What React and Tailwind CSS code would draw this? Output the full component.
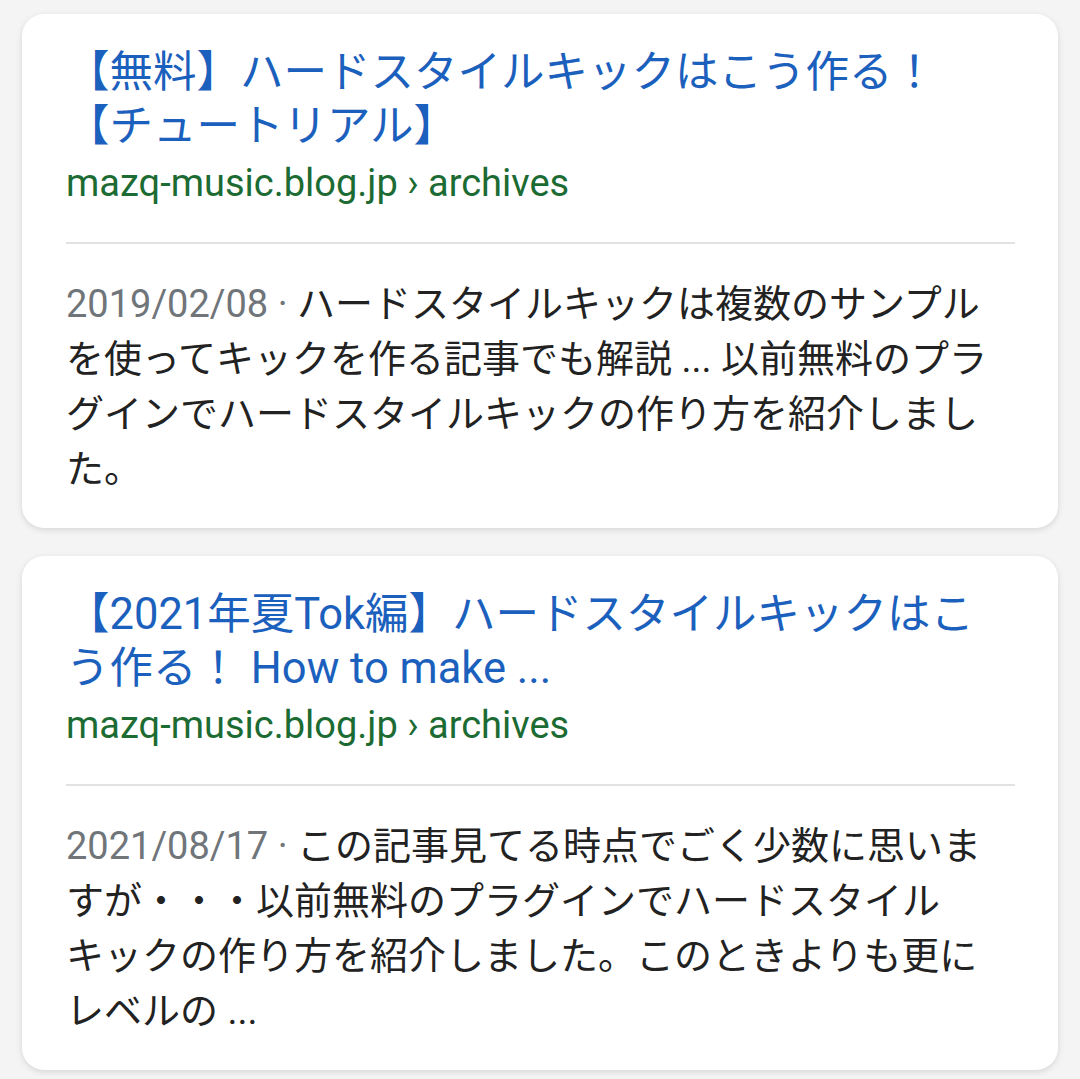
const results = [
  {
    title: ["【無料】ハードスタイルキックはこう作る！", "【チュートリアル】"],
    url: "mazq-music.blog.jp › archives",
    date: "2019/02/08",
    lines: [
      "ハードスタイルキックは複数のサンプル",
      "を使ってキックを作る記事でも解説 ... 以前無料のプラ",
      "グインでハードスタイルキックの作り方を紹介しまし",
      "た。",
    ],
  },
  {
    title: ["【2021年夏Tok編】ハードスタイルキックはこ", "う作る！ How to make ..."],
    url: "mazq-music.blog.jp › archives",
    date: "2021/08/17",
    lines: [
      "この記事見てる時点でごく少数に思いま",
      "すが・・・以前無料のプラグインでハードスタイル",
      "キックの作り方を紹介しました。このときよりも更に",
      "レベルの ...",
    ],
  },
];

function ResultCard({ item }) {
  return (
    <div className="bg-white rounded-[22px] shadow-[0_2px_6px_rgba(0,0,0,0.12)] pl-[44px] pr-[43px] pt-[32px] pb-[31px]">
      <div className="text-[43.5px] leading-[54px] text-[#1b60bd] whitespace-nowrap">
        {item.title.map((t) => (
          <div key={t}>{t}</div>
        ))}
      </div>
      <div className="mt-[4px] text-[38px] leading-[50px] text-[#1b6b33] whitespace-nowrap">
        {item.url}
      </div>
      <div className="mt-[34px] h-[2px] bg-[#e2e2e2]" />
      <div className="mt-[33px] text-[38px] leading-[55px] text-[#222222] whitespace-nowrap">
        {item.lines.map((l, i) => (
          <div key={i}>
            {i === 0 && (
              <span className="text-[#70757a]">{item.date} · </span>
            )}
            {l}
          </div>
        ))}
      </div>
    </div>
  );
}

export default function App() {
  return (
    <div
      className="min-h-[1079px] bg-[#f4f4f4] px-[22px] pt-[14px] flex flex-col gap-[28px]"
      style={{ fontFamily: 'Roboto, "Noto Sans CJK JP", sans-serif' }}
    >
      {results.map((r, i) => (
        <ResultCard key={i} item={r} />
      ))}
    </div>
  );
}
